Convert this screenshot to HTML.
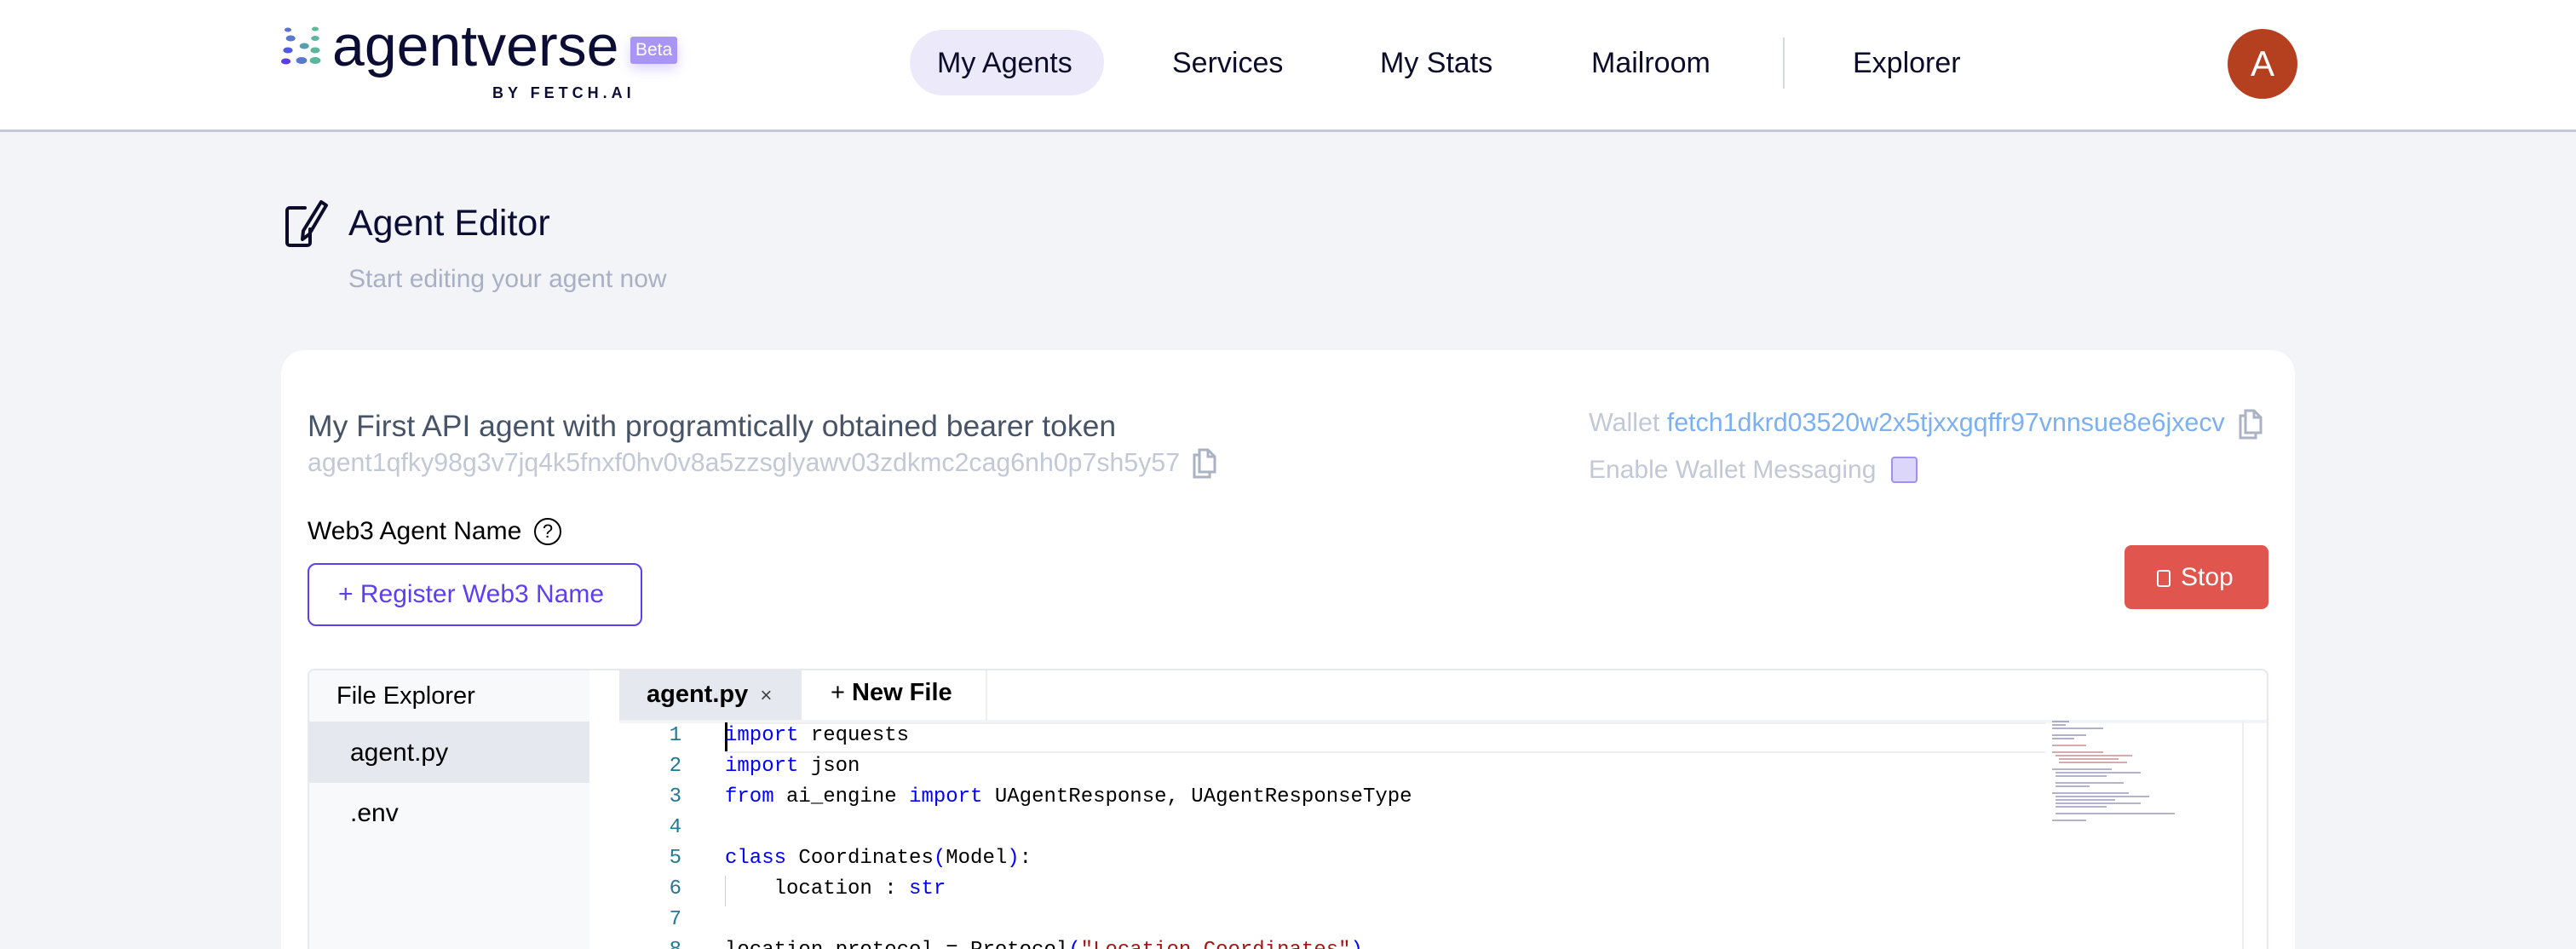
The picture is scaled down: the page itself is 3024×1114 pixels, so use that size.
<!DOCTYPE html>
<html><head><meta charset="utf-8"><style>
*{margin:0;padding:0;box-sizing:border-box}
html,body{width:3024px;height:1114px;overflow:hidden}
body{background:#f3f4f8;font-family:"Liberation Sans",sans-serif;position:relative}
.a{position:absolute;white-space:pre}
header{position:absolute;left:0;top:0;width:3024px;height:155px;background:#fff;border-bottom:3px solid #c3cad6}
.nav{font-size:34px;color:#0b0b2a;top:55px}
.code{font-family:"Liberation Mono",monospace;font-size:24px;color:#000}
.ln{font-family:"Liberation Mono",monospace;font-size:24px;color:#237893;width:60px;text-align:right}
.k{color:#0000ff}.s{color:#a31515}
</style></head><body>
<header>
<svg class="a" style="left:330px;top:31px" width="48" height="46" viewBox="0 0 30 46" preserveAspectRatio="none">
<circle cx="5" cy="4" r="2.5" fill="#5d6fd8"/><circle cx="25" cy="3" r="2.5" fill="#5db99a"/>
<circle cx="7" cy="14" r="3.5" fill="#5a78cc"/><circle cx="25" cy="14" r="3" fill="#5cb59e"/>
<circle cx="5" cy="28" r="3.5" fill="#4f5ae0"/><circle cx="17" cy="23" r="3.5" fill="#58a0b0"/><circle cx="25" cy="28" r="3.5" fill="#5cb59e"/>
<circle cx="3.5" cy="41" r="3.5" fill="#5a3de8"/><circle cx="15" cy="40" r="4" fill="#5b78d0"/><circle cx="25" cy="40" r="4" fill="#5cb59e"/>
</svg>
<div class="a" style="left:390px;top:15px;font-size:68px;color:#0b0d35">agentverse</div>
<div class="a" style="left:578px;top:99px;font-size:18px;color:#0b0d35;font-weight:bold;letter-spacing:5px">BY FETCH.AI</div>
<div class="a" style="left:740px;top:43px;padding:4px 6px;background:#a995f6;color:#fff;font-size:21px;border-radius:3px;box-shadow:0 6px 14px rgba(140,120,240,.3)">Beta</div>
<div class="a" style="left:1068px;top:35px;width:228px;height:77px;border-radius:39px;background:#ece9fb"></div>
<div class="a nav" style="left:1100px">My Agents</div>
<div class="a nav" style="left:1376px">Services</div>
<div class="a nav" style="left:1620px">My Stats</div>
<div class="a nav" style="left:1868px">Mailroom</div>
<div class="a" style="left:2093px;top:44px;width:2px;height:60px;background:#d5d8e0"></div>
<div class="a nav" style="left:2175px">Explorer</div>
<div class="a" style="left:2615px;top:34px;width:82px;height:82px;border-radius:50%;background:#b5401f;color:#fff;font-size:42px;text-align:center;line-height:82px">A</div>
</header>

<svg class="a" style="left:334px;top:233px" width="56" height="58" viewBox="0 0 56 58" fill="none" stroke="#0b0b2a" stroke-width="4" stroke-linejoin="round" stroke-linecap="round">
<path d="M24 11H6a3 3 0 0 0-3 3v38a3 3 0 0 0 3 3h21a3 3 0 0 0 3-3V36"/>
<path d="M43 4l6 4-20 34-8 6 1-10z"/>
</svg>
<div class="a" style="left:409px;top:238px;font-size:43px;color:#0b0d35">Agent Editor</div>
<div class="a" style="left:409px;top:311px;font-size:30px;color:#a8b0c4">Start editing your agent now</div>

<div class="a" style="left:330px;top:411px;width:2364px;height:703px;background:#fff;border-radius:28px 28px 0 0"></div>
<div class="a" style="left:361px;top:480px;font-size:35.5px;color:#475467">My First API agent with programtically obtained bearer token</div>
<div class="a" style="left:361px;top:527px;font-size:30.3px;color:#c2c8d6">agent1qfky98g3v7jq4k5fnxf0hv0v8a5zzsglyawv03zdkmc2cag6nh0p7sh5y57</div>
<svg class="a" style="left:1397px;top:524px" width="34" height="40" viewBox="0 0 34 40" fill="none" stroke="#aab2c4" stroke-width="3"><path d="M11 4h10l8 8v18H11z"/><path d="M21 4v8h8"/><path d="M11 10H5v26h18v-6"/></svg>
<div class="a" style="left:1865px;top:479px;font-size:30.4px;color:#c2c8d6">Wallet <span style="color:#7db0ef">fetch1dkrd03520w2x5tjxxgqffr97vnnsue8e6jxecv</span></div>
<svg class="a" style="left:2625px;top:478px" width="34" height="40" viewBox="0 0 34 40" fill="none" stroke="#aab2c4" stroke-width="3"><path d="M11 4h10l8 8v18H11z"/><path d="M21 4v8h8"/><path d="M11 10H5v26h18v-6"/></svg>
<div class="a" style="left:1865px;top:535px;font-size:30px;color:#c2c8d6">Enable Wallet Messaging</div>
<div class="a" style="left:2220px;top:536px;width:31px;height:31px;border:2px solid #a18ff2;background:#dcd6fb;border-radius:4px"></div>

<div class="a" style="left:361px;top:607px;font-size:30px;color:#000">Web3 Agent Name</div>
<div class="a" style="left:627px;top:608px;width:32px;height:32px;border:2.5px solid #000;border-radius:50%;font-size:22px;text-align:center;line-height:28px">?</div>
<div class="a" style="left:361px;top:661px;width:393px;height:74px;border:2.5px solid #5b3ff0;border-radius:10px;color:#5b3ff0;font-size:30px;line-height:69px;padding-left:34px">+ Register Web3 Name</div>

<div class="a" style="left:2494px;top:640px;width:169px;height:75px;background:#e0564e;border-radius:8px;color:#fff;font-size:30px;line-height:75px;padding-left:38px"><span style="display:inline-block;width:16px;height:20px;border:2.5px solid #fff;border-radius:3px;vertical-align:-2px;margin-right:12px"></span>Stop</div>

<div class="a" style="left:361px;top:785px;width:2302px;height:329px;border:2px solid #e6e9ef;border-bottom:none;border-radius:8px 8px 0 0;background:#fff;overflow:hidden">
 <div class="a" style="left:0;top:0;width:329px;height:340px;background:#f8f9fb"></div>
 <div class="a" style="left:32px;top:14px;font-size:29px;color:#000">File Explorer</div>
 <div class="a" style="left:0;top:60px;width:329px;height:72px;background:#e5e8ee"></div>
 <div class="a" style="left:48px;top:80px;font-size:30px;color:#000">agent.py</div>
 <div class="a" style="left:48px;top:151px;font-size:30px;color:#000">.env</div>
 <div class="a" style="left:364px;top:0;width:214px;height:58px;background:#e5e8ee"></div>
 <div class="a" style="left:396px;top:12px;font-size:29px;color:#000;font-weight:bold">agent.py <span style="font-weight:normal;font-size:24px;color:#444;margin-left:6px">×</span></div>
 <div class="a" style="left:580px;top:0;width:216px;height:58px;background:#fff;border-right:2px solid #eee"></div>
 <div class="a" style="left:612px;top:10px;font-size:29px;color:#000;font-weight:bold"><span style="font-weight:normal">+</span> New File</div>
 <div class="a" style="left:364px;top:58px;width:1938px;height:4px;background:#f3f4f8"></div>
</div>
<div class="a" style="left:851px;top:848px;width:1550px;height:36px;border-top:2px solid #eeeeee;border-bottom:2px solid #eeeeee"></div>
<div class="a" style="left:851px;top:848px;width:3px;height:34px;background:#000"></div>
<div class="a" style="left:851px;top:1028px;width:1px;height:36px;background:#ccc"></div>
<div class="a" style="left:2632px;top:847px;width:2px;height:267px;background:#eee"></div>
<div class="a ln" style="left:740px;top:850px">1</div>
<div class="a ln" style="left:740px;top:886px">2</div>
<div class="a ln" style="left:740px;top:922px">3</div>
<div class="a ln" style="left:740px;top:958px">4</div>
<div class="a ln" style="left:740px;top:994px">5</div>
<div class="a ln" style="left:740px;top:1030px">6</div>
<div class="a ln" style="left:740px;top:1066px">7</div>
<div class="a ln" style="left:740px;top:1102px">8</div>
<div class="a code" style="left:851px;top:850px"><span class="k">import</span> requests</div>
<div class="a code" style="left:851px;top:886px"><span class="k">import</span> json</div>
<div class="a code" style="left:851px;top:922px"><span class="k">from</span> ai_engine <span class="k">import</span> UAgentResponse, UAgentResponseType</div>
<div class="a code" style="left:851px;top:994px"><span class="k">class</span> Coordinates<span class="k">(</span>Model<span class="k">)</span>:</div>
<div class="a code" style="left:851px;top:1030px">    location : <span class="k">str</span></div>
<div class="a code" style="left:851px;top:1102px">location_protocol = Protocol<span class="k">(</span><span class="s">"Location Coordinates"</span><span class="k">)</span></div>
<svg class="a" style="left:2407px;top:845px" width="200" height="150">
<g stroke-width="1.5" opacity=".7">
<path d="M2 2h20M2 6h16M2 10h60M2 18h40M2 22h26" stroke="#6a6aa0"/>
<path d="M2 30h40M2 38h60M6 42h90M10 46h70M10 50h80" stroke="#b06060"/>
<path d="M2 58h70M6 62h100M6 66h60M6 74h80M6 78h40M2 86h90M6 90h110M6 94h70M6 98h100M6 102h60M6 110h140M2 118h40" stroke="#7070a0"/>
</g></svg>
</body></html>
